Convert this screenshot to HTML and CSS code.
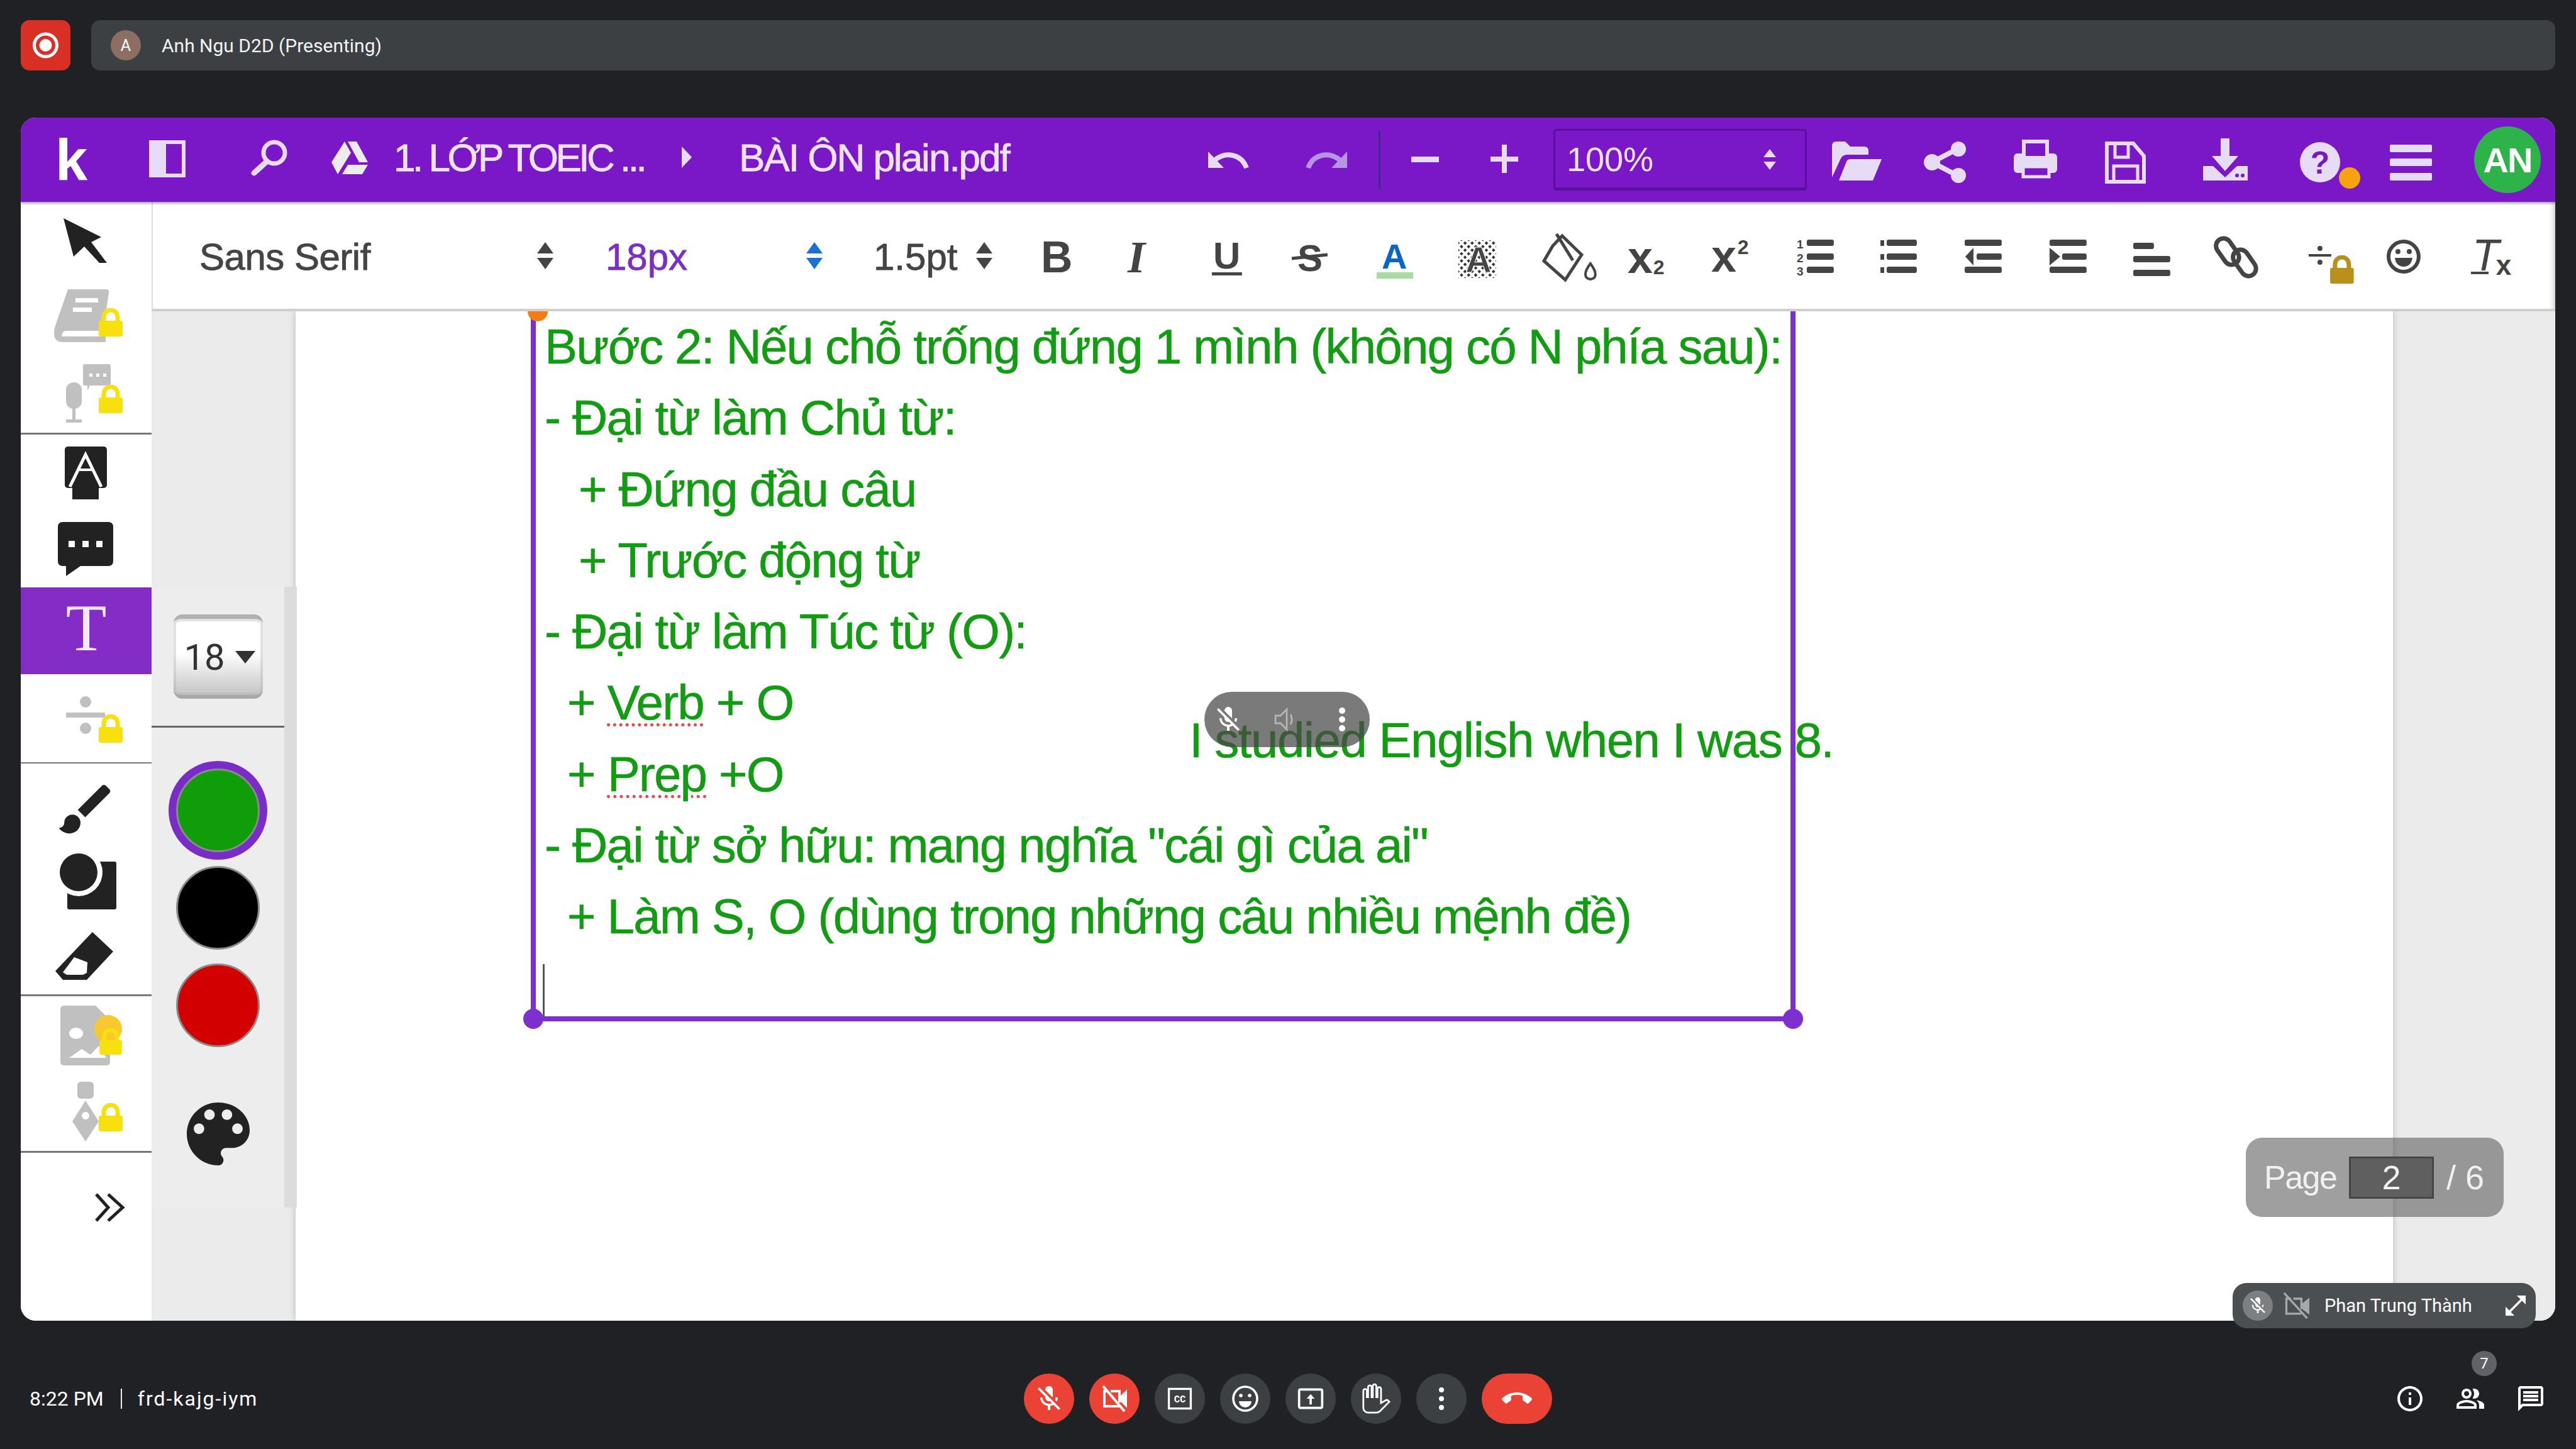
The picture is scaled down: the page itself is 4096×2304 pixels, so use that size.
FILE: index.html
```html
<!DOCTYPE html>
<html lang="en">
<head>
    <meta charset="UTF-8">
    <title>Meet - frd-kajg-iym</title>
    <link rel="stylesheet" href="styles.css">
</head>
<body>
    <svg class="defs" width="0" height="0">
        <symbol id="lock" viewBox="0 0 38 45">
            <rect x="0" y="20" width="38" height="25" rx="3"/>
            <path d="M8 22v-8a11 11 0 0 1 22 0v8" fill="none" stroke="currentColor" stroke-width="7"/>
        </symbol>
        <pattern id="dither" width="8" height="8" patternUnits="userSpaceOnUse" patternTransform="rotate(45)">
            <rect width="4" height="4" fill="#333"/>
        </pattern>
    </svg>

    <!-- Presenting banner -->
    <div class="topbar">
        <div class="rec">
            <svg width="79" height="80" viewBox="0 0 79 80"><circle cx="39.500" cy="40" r="18" fill="none" stroke="#fff" stroke-width="5"/><circle cx="39.500" cy="40" r="10" fill="#fff"/></svg>
        </div>
        <div class="banner">
            <span class="banner-avatar">A</span>
            <span class="banner-text">Anh Ngu D2D (Presenting)</span>
        </div>
    </div>

    <div class="window">
        <!-- Purple header -->
        <div class="header">
            <span class="logo">k</span>
            <svg width="130" height="134" viewBox="200 187 130 134"><rect x="240" y="226" width="52" height="53" fill="none" stroke="#e6dcf6" stroke-width="6"/><rect x="240" y="226" width="24" height="53" fill="#e6dcf6"/></svg>
            <svg width="170" height="134" viewBox="330 187 170 134"><circle cx="436" cy="243" r="17" fill="none" stroke="#e6dcf6" stroke-width="7"/><path d="M424 257 404 275" stroke="#e6dcf6" stroke-width="9" stroke-linecap="round"/></svg>
            <svg width="126" height="134" viewBox="500 187 126 134" fill="#ececec"><path d="M548 225 527 258l10 19 21-34z"/><path d="M553 225h14l18 33h-14z"/><path d="M544 277l9-15h32l-9 15z"/></svg>
            <span class="crumb">1. LỚP TOEIC ...</span>
            <svg width="80" height="134" viewBox="1060 187 80 134"><path d="M1084 233l16 17-16 17z" fill="#e6dcf6"/></svg>
            <span class="crumb crumb-file">BÀI ÔN plain.pdf</span>
            <div class="spacer"></div>
            <svg width="138" height="134" viewBox="1885 187 138 134"><path d="M1983 267c-8-22-33-27-51-12" fill="none" stroke="#e6dcf6" stroke-width="8"/><path d="M1922 241v26h25z" fill="#e6dcf6"/></svg>
            <svg width="170" height="134" viewBox="2023 187 170 134" fill="#b596e2"><path d="M2081 267c8-22 33-27 51-12" fill="none" stroke="#b596e2" stroke-width="8"/><path d="M2143 241v26h-25z"/></svg>
            <div class="vsep"></div>
            <svg width="110" height="134" viewBox="2199 187 110 134"><rect x="2245" y="249" width="44" height="9" fill="#e6dcf6"/></svg>
            <svg width="162" height="134" viewBox="2309 187 162 134" fill="#e6dcf6"><rect x="2371" y="249" width="44" height="8"/><rect x="2389" y="230" width="8" height="45"/></svg>
            <div class="zoom-select">
                <span>100%</span>
                <svg width="20" height="33" viewBox="0 0 20 33" fill="#e6dcf6"><path d="M10 0l10 13H0z"/><path d="M10 33 0 20h20z"/></svg>
            </div>
            <svg width="142" height="134" viewBox="2882 187 142 134" fill="#e6dcf6"><path d="M2914 232q0-7 7-7h14l8 8h22q7 0 7 7v6h-34q-7 0-10 6l-14 30z"/><path d="M2925 287l12-30q2-4 6-4h50l-14 34z"/></svg>
            <svg width="142" height="134" viewBox="3024 187 142 134" fill="#e6dcf6"><path d="M3115 236 3073 258 3115 280" fill="none" stroke="#e6dcf6" stroke-width="8"/><circle cx="3115" cy="237" r="12"/><circle cx="3073" cy="258" r="13"/><circle cx="3115" cy="279" r="12"/></svg>
            <svg width="144" height="134" viewBox="3166 187 144 134" fill="#e6dcf6"><rect x="3203" y="244" width="69" height="31" rx="6"/><rect x="3219" y="225" width="37" height="26" fill="#7a18c8" stroke="#e6dcf6" stroke-width="6"/><rect x="3218" y="265" width="41" height="16" fill="#7a18c8" stroke="#e6dcf6" stroke-width="5"/></svg>
            <svg width="150" height="134" viewBox="3310 187 150 134" fill="none" stroke="#e6dcf6"><path d="M3351 228h42l17 20v41h-59z" stroke-width="6"/><path d="M3364 228v22h21v-22" stroke-width="5"/><rect x="3362" y="264" width="38" height="25" stroke-width="5"/></svg>
            <svg width="160" height="134" viewBox="3460 187 160 134" fill="#e6dcf6"><rect x="3532" y="220" width="14" height="30"/><path d="M3518 248h42l-21 24z"/><path d="M3504 264h16l19 18 19-18h17v23h-71z"/><circle cx="3558" cy="279" r="3" fill="#7a18c8"/><circle cx="3567" cy="279" r="3" fill="#7a18c8"/></svg>
            <svg width="145" height="134" viewBox="3620 187 145 134"><circle cx="3690" cy="258" r="32" fill="#e6dcf6"/><text x="3690" y="276" class="help-mark">?</text><circle cx="3737" cy="283" r="17" fill="#f5a30f"/></svg>
            <svg width="145" height="134" viewBox="3765 187 145 134" fill="#e6dcf6"><rect x="3801" y="230" width="67" height="12" rx="2"/><rect x="3801" y="252" width="67" height="12" rx="2"/><rect x="3801" y="275" width="67" height="12" rx="2"/></svg>
            <span class="user-avatar">AN</span>
        </div>

        <div class="body">
            <!-- Left tool rail -->
            <div class="rail">
                <div class="rail-group">
                    <svg width="208" height="122" viewBox="33 321 208 122" fill="#222"><path d="M101 347l60 30-16 8 25 33-12 0-24-26-17 16z"/></svg>
                    <svg width="208" height="125" viewBox="33 443 208 125" fill="#c0c0c0" color="#f8e00e"><path d="M108 460h60q6 0 5 6l-9 60h-58q-8 0-8 9h70v9h-68q-14 0-14-14 0-8 4-18z"/><rect x="120" y="474" width="36" height="7" fill="#fff"/><rect x="116" y="489" width="30" height="7" fill="#fff"/><use href="#lock" x="157" y="490" width="38" height="45" fill="#f8e00e"/></svg>
                    <svg width="208" height="120" viewBox="33 568 208 120" fill="#c0c0c0" color="#f8e00e"><rect x="105" y="608" width="25" height="42" rx="12"/><rect x="115" y="648" width="5" height="20"/><rect x="105" y="667" width="25" height="5"/><path d="M135 579h38q3 0 3 3v28q0 3-3 3h-30l-4 8v-8h-4q-3 0-3-3v-28q0-3 3-3z"/><g fill="#fff"><rect x="142" y="594" width="5" height="5"/><rect x="153" y="594" width="5" height="5"/><rect x="164" y="594" width="5" height="5"/></g><use href="#lock" x="157" y="612" width="38" height="45" fill="#f8e00e"/></svg>
                </div>
                <div class="rail-group">
                    <svg width="208" height="123" viewBox="33 690 208 123"><rect x="103" y="709" width="67" height="66" rx="5" fill="#222"/><path d="M115 793v-18l21-27 21 27v18z" fill="#222"/><path d="M111 773 136 722l25 51" fill="none" stroke="#fff" stroke-width="5"/><path d="M124 746h24" stroke="#fff" stroke-width="4"/></svg>
                    <svg width="208" height="120" viewBox="33 813 208 120"><path d="M100 829h72q8 0 8 8v54q0 8-8 8h-44l-23 16v-16h-5q-8 0-8-8v-54q0-8 8-8z" fill="#222"/><g fill="#fff"><rect x="109" y="859" width="10" height="10"/><rect x="131" y="859" width="10" height="10"/><rect x="153" y="859" width="10" height="10"/></g></svg>
                    <div class="rail-active">T</div>
                    <svg width="208" height="140" viewBox="33 1071 208 140" fill="#c0c0c0"><circle cx="136" cy="1115" r="9"/><rect x="105" y="1132" width="62" height="8"/><circle cx="136" cy="1157" r="9"/><use href="#lock" x="157" y="1135" width="38" height="45" fill="#f8e00e" color="#f8e00e"/></svg>
                </div>
                <div class="rail-group">
                    <svg width="208" height="130" viewBox="33 1213 208 130"><g transform="translate(85 1234) scale(4.300)"><path d="M7 14c-1.660 0-3 1.340-3 3 0 1.310-1.160 2-2 2 .92 1.220 2.490 2 4 2 2.210 0 4-1.790 4-4 0-1.660-1.340-3-3-3zm13.710-9.370l-1.340-1.340c-.39-.39-1.020-.39-1.410 0L9 12.250 11.750 15l8.960-8.960c.39-.39.39-1.030 0-1.410z" fill="#222"/></g></svg>
                    <svg width="208" height="120" viewBox="33 1343 208 120"><rect x="107" y="1369" width="78" height="76" rx="3" fill="#222"/><circle cx="125" cy="1386" r="38" fill="#fff"/><circle cx="125" cy="1386" r="30" fill="#222"/></svg>
                    <svg width="208" height="117" viewBox="33 1463 208 117"><path d="M147 1481l33 31-42 45h-38l-12-14z" fill="#222"/><path d="M100 1545l18-24 21 8-1 17-6 3h-26z" fill="#fff"/></svg>
                </div>
                <div class="rail-group">
                    <svg width="208" height="120" viewBox="33 1582 208 120"><path d="M102 1597h50l23 23v66q0 6-6 6h-67q-6 0-6-6v-83q0-6 6-6z" fill="#c0c0c0"/><ellipse cx="121" cy="1641" rx="11" ry="9" fill="#fff"/><path d="M110 1680l20-14 14 9 13-14 12 19z" fill="#fff"/><circle cx="172" cy="1634" r="22" fill="#f8c92e"/><use href="#lock" x="157" y="1633" width="38" height="42" fill="#f8e00e" color="#f8e00e"/></svg>
                    <svg width="208" height="126" viewBox="33 1702 208 126" fill="#c0c0c0"><rect x="123" y="1718" width="26" height="27" rx="6"/><path d="M136 1748l21 33-21 32-21-32z"/><circle cx="136" cy="1772" r="6" fill="#fff"/><use href="#lock" x="157" y="1752" width="38" height="45" fill="#f8e00e" color="#f8e00e"/></svg>
                </div>
                <svg width="208" height="180" viewBox="33 1830 208 180" fill="none" stroke="#222" stroke-width="5"><path d="M153 1896l19 21-19 21"/><path d="M172 1896l23 21-23 21"/></svg>
            </div>

            <div class="main">
                <!-- Format toolbar -->
                <div class="toolbar">
                    <span class="font-name">Sans Serif</span>
                    <svg class="updown" width="26" height="43" viewBox="0 0 26 43"><path d="M13 0l13 18H0z"/><path d="M13 43 0 25h26z"/></svg>
                    <span class="font-size">18px</span>
                    <svg class="updown updown-blue" width="26" height="43" viewBox="0 0 26 43"><path d="M13 0l13 18H0z"/><path d="M13 43 0 25h26z"/></svg>
                    <span class="line-size">1.5pt</span>
                    <svg class="updown" width="26" height="43" viewBox="0 0 26 43"><path d="M13 0l13 18H0z"/><path d="M13 43 0 25h26z"/></svg>
                    <div class="tool-spacer"></div>
                    <svg class="tool" viewBox="1613 357 134 100"><text x="1655" y="434" class="t-bold">B</text></svg>
                    <svg class="tool" viewBox="1747 357 134 100"><text x="1793" y="434" class="t-italic">I</text></svg>
                    <svg class="tool" viewBox="1881 357 134 100"><text x="1929" y="428" class="t-plain">U</text><rect x="1927" y="434" width="48" height="5" fill="#444"/></svg>
                    <svg class="tool" viewBox="2015 357 134 100"><text x="2064" y="432" class="t-plain">S</text><path d="M2055 412l57-6" stroke="#444" stroke-width="5"/></svg>
                    <svg class="tool" viewBox="2149 357 134 100"><text x="2198" y="428" class="t-color">A</text><rect x="2190" y="434" width="58" height="10" fill="#a6dca0"/></svg>
                    <svg class="tool" viewBox="2283 357 134 100"><rect x="2320" y="383" width="60" height="60" fill="url(#dither)"/><text x="2331" y="434" class="t-high">A</text></svg>
                    <svg class="tool" viewBox="2417 357 134 100" fill="none" stroke="#444" stroke-width="5"><path d="M2470 392l-14 24 34 30 26-40-31-30z"/><path d="M2476 373l26 42"/><path d="M2530 420c-12 16-9 24 0 25 9-1 12-9 0-25z" stroke-width="4"/></svg>
                    <svg class="tool" viewBox="2551 357 134 100"><text x="2589" y="435" class="t-x">x</text><text x="2630" y="437" class="t-small">2</text></svg>
                    <svg class="tool" viewBox="2685 357 134 100"><text x="2723" y="433" class="t-x">x</text><text x="2765" y="405" class="t-small">2</text></svg>
                    <svg class="tool" viewBox="2819 357 134 100"><g class="t-num"><text x="2859" y="396">1</text><text x="2859" y="418">2</text><text x="2859" y="439">3</text></g><g fill="#444"><rect x="2875" y="382" width="43" height="10" rx="3"/><rect x="2875" y="404" width="43" height="10" rx="3"/><rect x="2875" y="425" width="43" height="10" rx="3"/></g></svg>
                    <svg class="tool" viewBox="2953 357 134 100" fill="#444"><rect x="2992" y="383" width="6" height="9"/><rect x="2992" y="405" width="6" height="9"/><rect x="2992" y="426" width="6" height="9"/><rect x="3002" y="382" width="48" height="10" rx="3"/><rect x="3002" y="404" width="48" height="10" rx="3"/><rect x="3002" y="425" width="48" height="10" rx="3"/></svg>
                    <svg class="tool" viewBox="3087 357 134 100" fill="#444"><rect x="3126" y="382" width="59" height="10" rx="3"/><path d="M3127 409l13-14v28z"/><rect x="3145" y="404" width="40" height="10" rx="3"/><rect x="3126" y="425" width="59" height="10" rx="3"/></svg>
                    <svg class="tool" viewBox="3221 357 134 100" fill="#444"><rect x="3261" y="382" width="59" height="10" rx="3"/><path d="M3278 409l-17-14v28z"/><rect x="3281" y="404" width="39" height="10" rx="3"/><rect x="3261" y="425" width="59" height="10" rx="3"/></svg>
                    <svg class="tool" viewBox="3355 357 134 100" fill="#444"><rect x="3395" y="387" width="33" height="10" rx="3"/><rect x="3395" y="408" width="59" height="10" rx="3"/><rect x="3395" y="430" width="59" height="10" rx="3"/></svg>
                    <svg class="tool" viewBox="3489 357 134 100" fill="none" stroke="#444" stroke-width="7"><rect x="3533" y="378" width="24" height="46" rx="12" transform="rotate(-35 3545 401)"/><rect x="3560" y="396" width="24" height="46" rx="12" transform="rotate(-35 3572 419)"/></svg>
                    <svg class="tool" viewBox="3623 357 134 100" fill="#444"><circle cx="3692" cy="396" r="4"/><rect x="3674" y="405" width="36" height="4"/><circle cx="3692" cy="418" r="4"/><use href="#lock" x="3708" y="407" width="38" height="45" fill="#b8901a" color="#b8901a"/></svg>
                    <svg class="tool" viewBox="3757 357 134 100"><circle cx="3825" cy="409" r="24" fill="none" stroke="#444" stroke-width="6"/><circle cx="3816" cy="401" r="4" fill="#444"/><circle cx="3834" cy="401" r="4" fill="#444"/><path d="M3811 411h28q-2 14-14 14t-14-14z" fill="#444"/></svg>
                    <svg class="tool" viewBox="3891 357 134 100"><text x="3934" y="431" class="t-clear">T</text><text x="3972" y="438" class="t-clear-x">x</text><rect x="3932" y="433" width="28" height="4" fill="#444"/></svg>
                </div>

                <div class="workspace">
                    <div class="page">
                        <div class="text-frame">
                            <span class="rotate-handle"></span>
                            <div class="line">Bước 2: Nếu chỗ trống đứng 1 mình (không có N phía sau):</div>
                            <div class="line">- Đại từ làm Chủ từ:</div>
                            <div class="line indent-b">+ Đứng đầu câu</div>
                            <div class="line indent-b">+ Trước động từ</div>
                            <div class="line">- Đại từ làm Túc từ (O):</div>
                            <div class="line indent-a">+ <span class="spell">Verb</span> + O</div>
                            <div class="line indent-a">+ <span class="spell">Prep</span> +O</div>
                            <div class="line">- Đại từ sở hữu: mang nghĩa "cái gì của ai"</div>
                            <div class="line indent-a">+ Làm S, O (dùng trong những câu nhiều mệnh đề)</div>
                            <span class="caret"></span>
                            <span class="handle handle-left"></span>
                            <span class="handle handle-right"></span>
                        </div>
                        <div class="float-text">I studied English when I was 8.</div>
                        <div class="media-pill">
                            <svg width="48" height="48" viewBox="0 0 24 24"><path d="M19 11h-1.700c0 .74-.16 1.430-.43 2.050l1.230 1.230c.56-.98.9-2.090.9-3.280zm-4.020.17c0-.06.02-.11.02-.17V5c0-1.660-1.340-3-3-3S9 3.340 9 5v.18l5.980 5.990zM4.270 3L3 4.270l6.010 6.010V11c0 1.660 1.330 3 2.990 3 .22 0 .44-.03.65-.08l1.660 1.660c-.71.33-1.500.52-2.310.52-2.760 0-5.300-2.100-5.300-5.100H5c0 3.410 2.720 6.230 6 6.720V21h2v-3.280c.91-.13 1.770-.45 2.540-.9L19.730 21 21 19.730 4.270 3z" fill="#fff"/></svg>
                            <svg class="pill-sound" width="40" height="48" viewBox="0 0 20 24" fill="none" stroke="#b5b5b5" stroke-width="1.400"><path d="M2 9v6h4l5 5V4L6 9z"/><path d="M14 8q2 4 0 8"/></svg>
                            <svg class="pill-more" width="12" height="48" viewBox="0 0 12 48" fill="#fff"><circle cx="6" cy="10" r="5"/><circle cx="6" cy="24" r="5"/><circle cx="6" cy="38" r="5"/></svg>
                        </div>
                    </div>
                    <!-- Colour popup -->
                    <div class="popup">
                        <div class="size-select"><span>18</span><i></i></div>
                        <div class="popup-line"></div>
                        <div class="swatch swatch-green"></div>
                        <div class="swatch swatch-black"></div>
                        <div class="swatch swatch-red"></div>
                        <svg class="palette" width="100" height="100" viewBox="3 3 18 18"><path d="M12 3c-4.970 0-9 4.030-9 9s4.030 9 9 9c.83 0 1.500-.67 1.500-1.500 0-.39-.15-.74-.39-1.010-.23-.26-.38-.61-.38-.99 0-.83.67-1.500 1.500-1.500H16c2.760 0 5-2.240 5-5 0-4.420-4.030-8-9-8zm-5.500 9c-.83 0-1.500-.67-1.500-1.500S5.670 9 6.500 9 8 9.670 8 10.500 7.330 12 6.500 12zm3-4C8.670 8 8 7.330 8 6.500S8.670 5 9.500 5s1.500.67 1.500 1.500S10.330 8 9.500 8zm5 0c-.83 0-1.500-.67-1.500-1.500S13.670 5 14.500 5s1.500.67 1.500 1.500S15.330 8 14.500 8zm3 4c-.83 0-1.500-.67-1.500-1.500S16.670 9 17.500 9s1.500.67 1.500 1.500-.67 1.500-1.500 1.500z" fill="#222"/></svg>
                    </div>
                    <div class="page-pill">
                        <span class="page-label">Page</span>
                        <span class="page-input">2</span>
                        <span class="page-total">/ 6</span>
                    </div>
                </div>
            </div>
        </div>
    </div>

    <!-- Meet call bar -->
    <div class="callbar">
        <div class="call-left">
            <span>8:22 PM</span>
            <span class="call-sep"></span>
            <span class="call-code">frd-kajg-iym</span>
        </div>
        <div class="call-controls">
            <span class="ctl ctl-red"><svg width="48" height="48" viewBox="0 0 24 24"><path d="M19 11h-1.700c0 .74-.16 1.430-.43 2.050l1.230 1.230c.56-.98.9-2.090.9-3.280zm-4.020.17c0-.06.02-.11.02-.17V5c0-1.660-1.340-3-3-3S9 3.340 9 5v.18l5.980 5.990zM4.270 3L3 4.270l6.010 6.010V11c0 1.660 1.330 3 2.990 3 .22 0 .44-.03.65-.08l1.660 1.660c-.71.33-1.500.52-2.310.52-2.760 0-5.300-2.100-5.300-5.100H5c0 3.410 2.720 6.230 6 6.720V21h2v-3.280c.91-.13 1.770-.45 2.540-.9L19.730 21 21 19.730 4.270 3z" fill="#fff"/></svg></span>
            <span class="ctl ctl-red"><svg width="48" height="48" viewBox="0 0 24 24" fill="none" stroke="#fff" stroke-width="2"><path d="M9 6h7v9"/><path d="M7 6H4v12h12"/><path d="M17 11l4-4v10l-4-4z" fill="#fff"/><path d="M3 2l17 20"/></svg></span>
            <span class="ctl"><svg width="44" height="44" viewBox="0 0 24 24"><rect x="2.500" y="3.500" width="19" height="17" fill="none" stroke="#fff" stroke-width="1.800"/><text x="12" y="15.500" class="cc-mark">CC</text></svg></span>
            <span class="ctl"><svg width="48" height="48" viewBox="0 0 24 24" fill="#fff"><circle cx="12" cy="12" r="9.500" fill="none" stroke="#fff" stroke-width="1.800"/><circle cx="8.500" cy="9.500" r="1.400"/><circle cx="15.500" cy="9.500" r="1.400"/><path d="M7 14h10a5 5 0 0 1-10 0z"/></svg></span>
            <span class="ctl"><svg width="44" height="44" viewBox="0 0 24 24" fill="#fff"><path d="M21 3H3c-1.110 0-2 .89-2 2v14c0 1.110.89 2 2 2h18c1.110 0 2-.89 2-2V5c0-1.110-.89-2-2-2zm0 16.020H3V4.980h18v14.040zM11 12H8.500L12 8l3.500 4H13v5h-2v-5z"/></svg></span>
            <span class="ctl"><svg width="50" height="50" viewBox="0 0 24 24" fill="none" stroke="#fff" stroke-width="1.500"><path transform="matrix(-.9 0 0 .9 23 1)" d="M23 5.500V20c0 2.200-1.800 4-4 4h-7.300c-1.080 0-2.100-.43-2.850-1.190L1 14.830s1.260-1.230 1.300-1.250c.22-.19.49-.29.79-.29.22 0 .42.06.6.16.04.01 4.310 2.460 4.310 2.460V4c0-.83.67-1.500 1.500-1.500S11 3.170 11 4v7h1V1.500c0-.83.67-1.500 1.500-1.500S15 .67 15 1.500V11h1V2.500c0-.83.67-1.500 1.500-1.500s1.500.67 1.500 1.500V11h1V5.500c0-.83.67-1.500 1.500-1.500s1.500.67 1.500 1.500z"/></svg></span>
            <span class="ctl"><svg width="48" height="48" viewBox="0 0 24 24" fill="#fff"><circle cx="12" cy="5" r="2"/><circle cx="12" cy="12" r="2"/><circle cx="12" cy="19" r="2"/></svg></span>
            <span class="ctl ctl-red ctl-end"><svg width="48" height="48" viewBox="0 0 24 24"><path d="M12 9c-1.600 0-3.150.25-4.600.72v3.100c0 .39-.23.74-.56.9-.98.49-1.870 1.120-2.660 1.850-.18.18-.43.28-.7.28-.28 0-.53-.11-.71-.29L.29 13.080c-.18-.17-.29-.42-.29-.7 0-.28.11-.53.29-.71C3.340 8.780 7.460 7 12 7s8.660 1.780 11.710 4.670c.18.18.29.43.29.71 0 .28-.11.53-.29.71l-2.480 2.480c-.18.18-.43.29-.71.29-.27 0-.52-.11-.7-.28-.79-.74-1.690-1.360-2.670-1.850-.33-.16-.56-.5-.56-.9v-3.100C15.150 9.250 13.600 9 12 9z" fill="#fff"/></svg></span>
        </div>
        <div class="call-right">
            <svg width="48" height="48" viewBox="0 0 24 24" fill="#fff"><path d="M11 7h2v2h-2zm0 4h2v6h-2zm1-9C6.480 2 2 6.480 2 12s4.480 10 10 10 10-4.480 10-10S17.520 2 12 2zm0 18c-4.410 0-8-3.590-8-8s3.590-8 8-8 8 3.590 8 8-3.590 8-8 8z"/></svg>
            <span class="people">
                <span class="people-badge">7</span>
                <svg width="48" height="48" viewBox="0 0 24 24" fill="#fff"><path d="M16.670 13.130C18.040 14.060 19 15.320 19 17v3h4v-3c0-2.180-3.570-3.470-6.330-3.870z"/><path d="M15 12c2.210 0 4-1.790 4-4s-1.790-4-4-4c-.47 0-.91.1-1.330.24C14.500 5.270 15 6.580 15 8s-.5 2.730-1.330 3.760c.42.14.86.24 1.330.24z"/><path d="M9 12c2.210 0 4-1.790 4-4s-1.790-4-4-4-4 1.790-4 4 1.790 4 4 4zm0-6c1.100 0 2 .9 2 2s-.9 2-2 2-2-.9-2-2 .9-2 2-2z"/><path d="M9 13c-2.670 0-8 1.340-8 4v3h16v-3c0-2.660-5.330-4-8-4zm6 5H3v-.99C3.200 16.290 6.300 15 9 15s5.800 1.290 6 2v1z"/></svg>
            </span>
            <svg width="48" height="48" viewBox="0 0 24 24" fill="#fff"><path transform="matrix(-1 0 0 1 24 0)" d="M21.990 4c0-1.100-.89-2-1.990-2H4c-1.100 0-2 .9-2 2v12c0 1.100.9 2 2 2h14l4 4-.01-18zM20 4v13.170L18.830 16H4V4h16zM6 12h12v2H6zm0-3h12v2H6zm0-3h12v2H6z"/></svg>
        </div>
    </div>

    <!-- Participant tile name -->
    <div class="tile">
        <span class="tile-mic"><svg width="32" height="32" viewBox="0 0 24 24"><path d="M19 11h-1.700c0 .74-.16 1.430-.43 2.050l1.230 1.230c.56-.98.9-2.090.9-3.280zm-4.020.17c0-.06.02-.11.02-.17V5c0-1.660-1.340-3-3-3S9 3.340 9 5v.18l5.980 5.990zM4.270 3L3 4.270l6.010 6.010V11c0 1.660 1.330 3 2.990 3 .22 0 .44-.03.65-.08l1.660 1.660c-.71.33-1.500.52-2.310.52-2.760 0-5.300-2.100-5.300-5.100H5c0 3.410 2.720 6.230 6 6.720V21h2v-3.280c.91-.13 1.770-.45 2.540-.9L19.730 21 21 19.730 4.270 3z" fill="#fff"/></svg></span>
        <svg class="tile-cam" width="44" height="44" viewBox="0 0 24 24" fill="none" stroke="#a6a9ac" stroke-width="1.800"><path d="M9 6h7v9"/><path d="M7 6H3v13h13"/><path d="M17 11l5-4v11l-5-4z" fill="#a6a9ac"/><path d="M1 1l20 22"/></svg>
        <span class="tile-name">Phan Trung Thành</span>
        <svg width="32" height="32" viewBox="3 3 18 18" fill="#fff"><path d="M21 11V3h-8l3.290 3.290-10 10L3 13v8h8l-3.290-3.290 10-10z"/></svg>
    </div>
</body>
</html>
```

FILE: styles.css
```css
* {
    box-sizing: border-box;
}
body {
    margin: 0;
    width: 4096px;
    height: 2304px;
    overflow: hidden;
    position: relative;
    display: flex;
    flex-direction: column;
    background: #202124;
    font-family: "Liberation Sans", Arial, sans-serif;
}
svg {
    flex: none;
    display: block;
}
.defs {
    position: absolute;
}

/* Presenting banner */
.topbar {
    height: 187px;
    padding: 32px 33px 0;
    display: flex;
    align-items: flex-start;
    gap: 33px;
}
.rec {
    width: 79px;
    height: 80px;
    background: #d93025;
    border-radius: 14px;
}
.banner {
    flex: 1;
    height: 80px;
    background: #3c4043;
    border-radius: 14px;
    display: flex;
    align-items: center;
    padding-left: 31px;
}
.banner-avatar {
    width: 48px;
    height: 48px;
    border-radius: 50%;
    background: #8d6e63;
    color: #fff;
    font: 25px Roboto, sans-serif;
    display: flex;
    align-items: center;
    justify-content: center;
}
.banner-text {
    margin-left: 33px;
    color: #f1f3f4;
    font: 30px Roboto, sans-serif;
}

/* App window */
.window {
    margin: 0 33px;
    height: 1913px;
    display: flex;
    flex-direction: column;
    background: #fff;
    border-radius: 24px;
    overflow: hidden;
}
.header {
    flex: none;
    height: 134px;
    padding-right: 23px;
    display: flex;
    align-items: center;
    background: #7a18c8;
    box-shadow: 0 3px 3px rgba(0,0,0,0.3);
    position: relative;
    z-index: 3;
    color: #ece3f5;
}
.logo {
    width: 167px;
    padding-left: 55px;
    color: #fff;
    font-size: 92px;
    font-weight: bold;
}
.crumb {
    width: 434px;
    padding-bottom: 8px;
    font-size: 62px;
    letter-spacing: -4.500px;
    -webkit-text-stroke: 0.8px #ece3f5;
    white-space: nowrap;
}
.crumb-file {
    width: auto;
    margin-left: 35px;
    letter-spacing: -2px;
}
.spacer {
    flex: 1;
}
.vsep {
    width: 3px;
    height: 92px;
    background: #3a2a8c;
    margin-right: 3px;
}
.zoom-select {
    width: 403px;
    height: 98px;
    padding: 0 46px 0 18px;
    display: flex;
    align-items: center;
    justify-content: space-between;
    border: 3px solid #5a0f9e;
    border-bottom-width: 5px;
    border-radius: 5px;
    font-size: 54px;
    margin-right: 8px;
}
.help-mark {
    font: bold 50px "Liberation Sans", sans-serif;
    text-anchor: middle;
    fill: #7a18c8;
}
.user-avatar {
    width: 106px;
    height: 106px;
    margin-left: 25px;
    border-radius: 50%;
    background: #2eb24a;
    color: #fff;
    font-size: 56px;
    font-weight: bold;
    letter-spacing: -2px;
    display: flex;
    align-items: center;
    justify-content: center;
}

.body {
    flex: 1;
    display: flex;
    min-height: 0;
}

/* Tool rail */
.rail {
    width: 208px;
    flex: none;
    background: #fff;
    position: relative;
    z-index: 2;
}
.rail-group {
    border-bottom: 3px solid #777;
}
.rail-group:nth-child(2) {
    border-bottom-width: 2px;
}
.rail-active {
    height: 138px;
    padding-bottom: 8px;
    background: #842dc6;
    color: #f6e9ff;
    font: 106px "Liberation Serif", serif;
    display: flex;
    align-items: center;
    justify-content: center;
}

.main {
    flex: 1;
    display: flex;
    flex-direction: column;
    min-width: 0;
}
.toolbar {
    flex: none;
    height: 174px;
    padding-left: 74px;
    display: flex;
    align-items: center;
    background: #fff;
    border-bottom: 4px solid #cfcfcf;
    border-left: 2px solid #ddd;
    box-shadow: inset -12px 0 10px -10px rgba(0,0,0,0.25);
    color: #444;
    font-size: 60px;
    -webkit-text-stroke: 0.8px currentColor;
    position: relative;
    z-index: 1;
}
.font-name {
    width: 537px;
    padding-top: 4px;
    letter-spacing: -0.500px;
}
.updown {
    fill: #444;
}
.updown-blue {
    fill: #1a73d0;
}
.font-size {
    width: 319px;
    margin-left: 83px;
    padding-top: 4px;
    color: #7b2fc4;
}
.line-size {
    width: 163px;
    margin-left: 81px;
    padding-top: 4px;
}
.tool-spacer {
    width: 35px;
}
.tool {
    width: 133.800px;
    height: 100px;
}
.tool text {
    font-family: "Liberation Sans", sans-serif;
    fill: #444;
    -webkit-text-stroke: 0;
}
.t-bold {
    font-size: 70px;
    font-weight: bold;
}
.tool .t-italic {
    font: bold italic 72px "Liberation Serif", serif;
}
.t-plain {
    font-size: 60px;
    font-weight: bold;
}
.t-high {
    font-size: 58px;
    font-weight: bold;
    stroke: #fff;
    stroke-width: 1px;
}
.tool .t-color {
    font-size: 56px;
    font-weight: bold;
    fill: #0b64c8;
}
.t-x {
    font-size: 72px;
    font-weight: bold;
}
.t-small {
    font-size: 32px;
    font-weight: bold;
}
.t-num text {
    font-size: 19px;
    font-weight: bold;
}
.tool .t-clear {
    font: italic 70px "Liberation Sans", sans-serif;
}
.t-clear-x {
    font-size: 44px;
    font-weight: bold;
}

/* Canvas */
.workspace {
    flex: 1;
    min-height: 0;
    position: relative;
    display: flex;
    background: #ebebeb;
    padding: 0 258px 0 229px;
}
.page {
    flex: 1;
    position: relative;
    background: #fff;
    padding-left: 374px;
    box-shadow: 0 0 10px rgba(0,0,0,0.22);
    color: #129c12;
    font-size: 78px;
    letter-spacing: -1.800px;
    -webkit-text-stroke: 0.6px #129c12;
    overflow: hidden;
}
.text-frame {
    width: 2011px;
    height: 1129px;
    padding-left: 14px;
    border: 8px solid #7e2fd0;
    border-top: 0;
    line-height: 113.300px;
    white-space: nowrap;
    position: relative;
}
.indent-a {
    padding-left: 36px;
}
.indent-b {
    padding-left: 54px;
}
.spell {
    text-decoration: underline dotted #e24a4a 5px;
    text-underline-offset: 6px;
}
.caret {
    display: block;
    width: 3px;
    height: 85px;
    margin-top: 18px;
    margin-left: -3px;
    background: #555;
}
.handle {
    position: absolute;
    bottom: -20px;
    width: 32px;
    height: 32px;
    border-radius: 50%;
    background: #7e2fd0;
}
.handle-left {
    left: -20px;
}
.handle-right {
    right: -20px;
}
.rotate-handle {
    position: absolute;
    top: -8px;
    left: -13px;
    width: 32px;
    height: 24px;
    border-radius: 0 0 16px 16px;
    background: #f57c14;
}
.float-text {
    position: absolute;
    left: 1421px;
    top: 637px;
    letter-spacing: -1.500px;
    white-space: nowrap;
}
.media-pill {
    position: absolute;
    left: 1445px;
    top: 605px;
    width: 263px;
    height: 88px;
    border-radius: 44px;
    background: rgba(70,70,70,0.72);
    display: flex;
    align-items: center;
    padding-left: 14px;
}
.pill-sound {
    margin-left: 47px;
}
.pill-more {
    margin-left: 64px;
}

/* Colour popup */
.popup {
    position: absolute;
    left: 0;
    top: 438px;
    width: 211px;
    height: 987px;
    background: #ededed;
    box-shadow: 20px 0 0 #dcdcdc;
    display: flex;
    flex-direction: column;
    align-items: center;
    padding-top: 44px;
}
.size-select {
    width: 142px;
    height: 134px;
    padding: 0 12px 0 17px;
    display: flex;
    align-items: center;
    justify-content: space-between;
    border-radius: 14px;
    border-top: 7px solid #b0b0b0;
    border-bottom: 6px solid #a8a8a8;
    background: linear-gradient(#fff 45%, #c4c4c4);
    box-shadow: inset 0 0 0 4px rgba(180,180,180,0.4);
    color: #333;
    font: 58px Roboto, sans-serif;
}
.size-select i {
    border-top: 20px solid #333;
    border-left: 16px solid transparent;
    border-right: 16px solid transparent;
}
.popup-line {
    width: 100%;
    height: 3px;
    margin-top: 43px;
    background: #666;
}
.swatch {
    width: 133px;
    height: 133px;
    border-radius: 50%;
    margin-top: 22px;
    border: 3px solid #8a8a8a;
}
.swatch-green {
    margin-top: 65px;
    background: #0f9e0a;
    box-shadow: 0 0 0 12px #7a2cc6;
}
.swatch-black {
    background: #000;
}
.swatch-red {
    background: #d20000;
}
.palette {
    margin-top: 88px;
}

.page-pill {
    position: absolute;
    right: 82px;
    bottom: 165px;
    width: 410px;
    height: 126px;
    padding: 0 29px;
    border-radius: 26px;
    background: rgba(90,90,90,0.58);
    display: flex;
    align-items: center;
    color: #f1f1f1;
    font-size: 54px;
}
.page-label {
    width: 135px;
    font-size: 52px;
    letter-spacing: -1.500px;
}
.page-input {
    width: 135px;
    height: 67px;
    line-height: 61px;
    text-align: center;
    background: #5f5f5f;
    border: 3px solid #454545;
}
.page-total {
    margin-left: 20px;
}

/* Meet call bar */
.callbar {
    height: 204px;
    padding: 44px 48px 0 47px;
    display: grid;
    grid-template-columns: 1fr auto 1fr;
    align-items: center;
    color: #fff;
    font: 32px Roboto, sans-serif;
}
.call-left {
    display: flex;
    align-items: center;
}
.call-sep {
    width: 2px;
    height: 32px;
    margin: 0 25px 0 27px;
    background: #e8eaed;
}
.call-code {
    letter-spacing: 2px;
}
.call-controls {
    display: flex;
    gap: 24px;
}
.ctl {
    width: 80px;
    height: 80px;
    border-radius: 50%;
    background: #3c4043;
    display: flex;
    align-items: center;
    justify-content: center;
}
.ctl-red {
    background: #ea4335;
}
.ctl-end {
    width: 112px;
    border-radius: 40px;
}
.cc-mark {
    font: bold 8.500px "Liberation Mono", monospace;
    text-anchor: middle;
    fill: #fff;
}
.call-right {
    display: flex;
    justify-content: flex-end;
    align-items: center;
    gap: 48px;
}
.people {
    position: relative;
}
.people-badge {
    position: absolute;
    left: 26px;
    top: -52px;
    width: 40px;
    height: 40px;
    border-radius: 50%;
    background: #5f6368;
    font-size: 24px;
    display: flex;
    align-items: center;
    justify-content: center;
}

.tile {
    position: absolute;
    left: 3550px;
    top: 2040px;
    width: 482px;
    height: 72px;
    padding: 0 16px;
    display: flex;
    align-items: center;
    border-radius: 22px;
    background: #4c4f52;
    color: #fff;
    font: 29px Roboto, sans-serif;
}
.tile-mic {
    width: 48px;
    height: 48px;
    border-radius: 50%;
    background: #7c8082;
    display: flex;
    align-items: center;
    justify-content: center;
}
.tile-cam {
    margin-left: 16px;
}
.tile-name {
    margin-left: 22px;
    flex: 1;
    white-space: nowrap;
}
```
